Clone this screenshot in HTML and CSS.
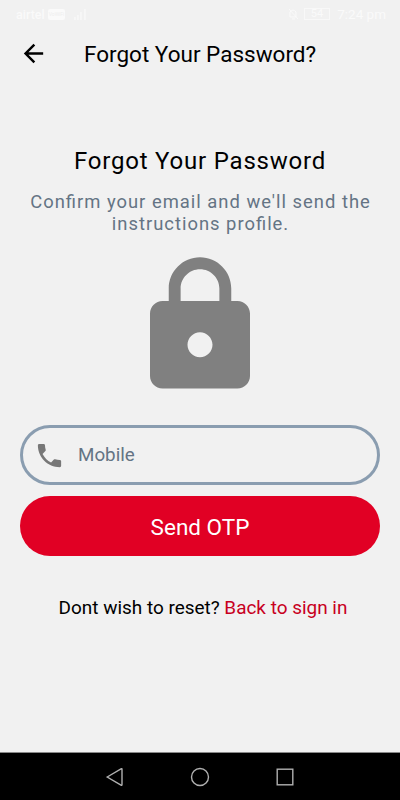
FILE: index.html
```html
<!DOCTYPE html>
<html lang="en">
<head>
  <meta charset="UTF-8">
  <title>Forgot Your Password?</title>
  <meta name="viewport" content="width=device-width, initial-scale=1.0">
  <link rel="stylesheet" href="styles.css">
</head>
<body>

  <div class="status">
    <span class="carrier">airtel</span>
    <span class="vowifi">VoWiFi</span>
    <svg class="signal" width="13" height="12" viewBox="0 0 13 12"><path d="M1 12V9M4 12V7M7 12V4M11 12V1" stroke="#fafafa" stroke-width="1.2"/></svg>
    <svg class="bell" width="11" height="12" viewBox="0 0 11 12"><path d="M1 1l9 10M2 9V4q3-4 6 0v5zM4 11h3" fill="none" stroke="#fafafa"/></svg>
    <span class="battery">54</span>
    <span class="time">7:24 pm</span>
  </div>

  <header class="header">
    <svg class="back" width="29" height="29" viewBox="0 0 24 24"><path d="M20 11H7.83l5.59-5.59L12 4l-8 8 8 8 1.41-1.41L7.83 13H20v-2z"/></svg>
    <h1>Forgot Your Password?</h1>
  </header>

  <main class="content">
    <h2>Forgot Your Password</h2>
    <p class="info">Confirm your email and we'll send the<br>instructions profile.</p>

    <svg class="lock" width="150" height="150" viewBox="0 0 24 24"><path d="M18 8h-1V6c0-2.76-2.24-5-5-5S7 3.24 7 6v2H6c-1.1 0-2 .9-2 2v10c0 1.1.9 2 2 2h12c1.1 0 2-.9 2-2V10c0-1.1-.9-2-2-2zm-6 9c-1.1 0-2-.9-2-2s.9-2 2-2 2 .9 2 2-.9 2-2 2zm3.1-9H8.9V6c0-1.71 1.39-3.1 3.1-3.1 1.71 0 3.1 1.39 3.1 3.1v2z"/></svg>

    <label class="field">
      <svg width="31" height="31" viewBox="0 0 24 24"><path d="M6.62 10.79c1.44 2.83 3.76 5.14 6.59 6.59l2.2-2.2c.27-.27.67-.36 1.02-.24 1.12.37 2.33.57 3.57.57.55 0 1 .45 1 1V20c0 .55-.45 1-1 1-9.39 0-17-7.61-17-17 0-.55.45-1 1-1h3.5c.55 0 1 .45 1 1 0 1.25.2 2.45.57 3.57.11.35.03.74-.25 1.02l-2.2 2.2z"/></svg>
      <input type="tel" placeholder="Mobile">
    </label>
    <button class="send">Send OTP</button>

    <p class="signin">Dont wish to reset? <a>Back to sign in</a></p>
  </main>

  <nav class="navbar">
    <svg width="20" height="20" viewBox="0 0 20 20"><path d="M2.2 10L16 1.8Q17 1.3 17 2.4v15.2Q17 18.7 16 18.2z"/></svg>
    <svg width="20" height="20" viewBox="0 0 20 20"><circle cx="10" cy="10" r="8.5"/></svg>
    <svg width="20" height="20" viewBox="0 0 20 20"><rect x="2.2" y="2.2" width="15.6" height="15.6"/></svg>
  </nav>

</body>
</html>
```

FILE: styles.css
```css
* { box-sizing: border-box; }
body { margin: 0; height: 800px; display: flex; flex-direction: column; background: #f1f1f1; color: #000; font-family: Roboto, sans-serif; overflow: hidden; }
h1, h2, p { margin: 0; font-weight: 400; }

.status { display: flex; align-items: center; height: 28px; padding: 0 14px 0 16px; color: #fafafa; font-size: 12.5px; }
.carrier { width: 32px; font-weight: 500; }
.vowifi { width: 17px; height: 11px; overflow: hidden; border-radius: 2px; background: #fafafa; color: #eee; font-size: 5px; line-height: 11px; text-align: center; }
.signal { margin-left: 9px; }
.bell { margin-left: auto; }
.battery { margin: 0 7px 0 5px; padding: 0 6px; border: 1px solid #f8f8f8; font-size: 11px; line-height: 10px; }
.time { font-size: 13.5px; }

.header { display: flex; align-items: center; height: 50px; padding-left: 19px; }
.header h1 { margin-left: 36px; padding-top: 1px; font-size: 22.5px; line-height: 26px; white-space: nowrap; }

.content { flex: 1; display: flex; flex-direction: column; align-items: center; padding: 68px 20px 0; }
.content h2 { font-size: 24px; line-height: 30px; letter-spacing: 0.8px; }
.info { margin-top: 15px; padding-left: 1px; color: #647484; font-size: 18.4px; line-height: 22px; letter-spacing: 1px; text-align: center; white-space: nowrap; font-feature-settings: "liga" 1; }
.lock { margin-top: 16px; fill: #808080; flex: none; }

.field { display: flex; align-items: center; width: 360px; height: 60px; margin-top: 24px; padding-left: 11px; border: 3px solid #8a9db0; border-radius: 30px; }
.field svg { fill: #777; }
.field input { width: 260px; margin-left: 13px; padding: 0 0 1px; border: 0; outline: 0; background: none; font: 18.8px Roboto, sans-serif; }
.field input::placeholder { color: #647484; opacity: 1; }

.send { width: 360px; height: 60px; margin-top: 11px; padding: 2px 0 0; border: 0; border-radius: 30px; background: #e10024; color: #fff; font: 22.5px Roboto, sans-serif; }
.signin { margin-top: 40px; padding-left: 6px; font-size: 18.95px; line-height: 24px; white-space: nowrap; }
.signin a { color: #c8001d; }

.navbar { display: flex; justify-content: center; align-items: center; gap: 65px; height: 48px; border-top: 1px solid #888; background: #000; }
.navbar svg { fill: none; stroke: #b0b0b0; stroke-width: 1.4; }
```
